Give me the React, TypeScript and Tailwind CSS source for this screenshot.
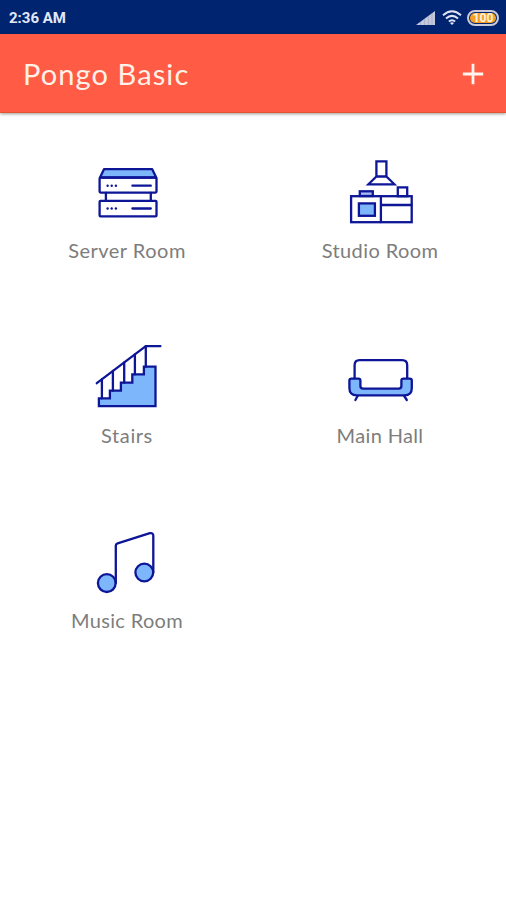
import type { ReactNode } from "react";

type Room = {
  name: string;
  icon: ReactNode;
  labelClass: string;
};

function RoomIcon({ children }: { children: ReactNode }) {
  return (
    <svg
      viewBox="0 0 64 64"
      className="h-16 w-16 overflow-visible"
      fill="none"
      stroke="#0d1696"
      strokeWidth="2.3"
      strokeLinejoin="round"
      strokeLinecap="round"
    >
      {children}
    </svg>
  );
}

function ServerIcon() {
  return (
    <RoomIcon>
      <path d="M9 9.2h48.2l4 8.3H5z" fill="#7db6fa" />
      <rect x="4.6" y="17.6" width="56.9" height="15" rx="1" />
      <rect x="4.6" y="40.8" width="56.9" height="15.6" rx="1" />
      <path d="M10.9 33v7.5M55.8 33v7.5M37.4 25.7h18.4M37.4 48.5h18.4" />
      <g fill="#0d1696" stroke="none">
        <circle cx="12.6" cy="25.7" r="1.2" />
        <circle cx="16.7" cy="25.7" r="1.2" />
        <circle cx="20.9" cy="25.7" r="1.2" />
        <circle cx="12.6" cy="48.5" r="1.2" />
        <circle cx="16.7" cy="48.5" r="1.2" />
        <circle cx="20.9" cy="48.5" r="1.2" />
      </g>
    </RoomIcon>
  );
}

function StudioIcon() {
  return (
    <RoomIcon>
      <g strokeLinejoin="miter">
        <path d="M28.4 1.3h10v15.2h-10zM28.4 16.5l-8 7.8h26l-8-7.8" />
        <rect x="11.8" y="31.3" width="13" height="4.7" fill="#a9b9f3" />
        <rect x="49.8" y="27.4" width="9.4" height="8.8" />
        <rect x="3.1" y="36.2" width="60.6" height="26" />
        <path d="M32.9 36.2v26M32.9 45h30.7" />
        <rect x="10.9" y="43.4" width="16" height="12.4" fill="#7db6fa" />
      </g>
    </RoomIcon>
  );
}

function StairsIcon() {
  return (
    <RoomIcon>
      <path
        d="M3.9 61.2v-7.9h11v-7.6h11v-8h11.4v-8.4h11.6v-7.6h11.6v39.5z"
        fill="#7db6fa"
        strokeLinejoin="miter"
      />
      <path d="M1.8 38.2L50.8 1.2h14.6" />
      <path d="M6.9 34.5v18.8M17.9 26v19.7M29.2 17.5v20.2M39.9 9.5v19.8M50.8 1.2v20.5" />
    </RoomIcon>
  );
}

function SofaIcon() {
  return (
    <RoomIcon>
      <path d="M6.6 33.5V20.2q0-5 5-5h42.6q5 0 5 5v13.3" />
      <path
        d="M3.4 33.6h7q2 0 2 2v5.4q0 2.6 2.6 2.6h35.8q2.6 0 2.6-2.6v-5.4q0-2 2-2h6.4q2 0 2 2v7.3q0 7.4-7.4 7.4H8.8q-7.4 0-7.4-7.4v-7.3q0-2 2-2z"
        fill="#7db6fa"
      />
      <path d="M9.6 51l-2.2 4M56.2 51l2.6 4" />
    </RoomIcon>
  );
}

function MusicIcon() {
  return (
    <RoomIcon>
      <circle cx="11.8" cy="53.1" r="8.9" fill="#7db6fa" />
      <circle cx="49.3" cy="42.5" r="8.9" fill="#7db6fa" />
      <path d="M20.8 53V15.6q0-1.8 1.8-2.3L54.9 3.2q3.4-.6 3.4 2.6v36.7" />
    </RoomIcon>
  );
}

const rooms: Room[] = [
  { name: "Server Room", icon: <ServerIcon />, labelClass: "tracking-[0.5px]" },
  { name: "Studio Room", icon: <StudioIcon />, labelClass: "tracking-[0.4px]" },
  { name: "Stairs", icon: <StairsIcon />, labelClass: "tracking-[0.6px]" },
  { name: "Main Hall", icon: <SofaIcon />, labelClass: "tracking-[0.35px]" },
  { name: "Music Room", icon: <MusicIcon />, labelClass: "tracking-[0.35px]" },
];

function StatusBar() {
  return (
    <div className="flex h-[34px] items-center justify-between bg-[#002470] pt-px pr-[7px] pl-[9px] text-[#e3e8f8]">
      <span className="pt-px font-[Roboto,sans-serif] text-[15px] font-bold">2:36 AM</span>
      <div className="flex items-center">
        <svg viewBox="0 0 20 14" className="mr-[6px] h-[14px] w-5">
          <path d="M0 14L19 0v14z" fill="#c3c8da" />
          <path d="M4.5 11v3M8.5 8v6M12.5 5v9M16 2.5V14" stroke="#a3aac6" strokeWidth=".7" />
        </svg>
        <svg
          viewBox="0 0 20 15"
          className="mr-[5px] h-[15px] w-5"
          fill="none"
          stroke="#dfe5f5"
          strokeWidth="2"
        >
          <path d="M1 5.2q9-8 18 0M4 8.6q6-5.4 12 0M6.9 11.6q3.1-2.8 6.2 0" />
          <path d="M8 13l2 2 2-2q-2-1.5-4 0z" fill="#dfe5f5" stroke="none" />
        </svg>
        <div className="flex h-4 w-8 items-center justify-center rounded-full border-2 border-[#c9cbd8] bg-[#002470] p-px">
          <div className="flex h-full w-full items-center justify-center rounded-full bg-[#f3a126] font-[Roboto,sans-serif] text-[12px] leading-none font-bold text-[#fff3dc]">
            <span className="-my-1">100</span>
          </div>
        </div>
      </div>
    </div>
  );
}

export default function App() {
  return (
    <div className="h-[900px] w-[506px] overflow-hidden bg-white font-[Lato,sans-serif]">
      <StatusBar />
      <header className="flex h-[79px] items-center justify-between border-b border-[#e5532f] bg-[#ff5b45] pt-[2px] pr-[22px] pl-[22px] shadow-[0_1px_3px_rgba(0,0,0,0.4)]">
        <h1 className="pl-px text-[29px] leading-9 tracking-[1.1px] text-[#fff1e8]">Pongo Basic</h1>
        <button type="button" aria-label="Add room">
          <svg
            viewBox="0 0 22 22"
            className="h-[22px] w-[22px]"
            stroke="#fff4ee"
            strokeWidth="2.8"
          >
            <path d="M11 .8v20.4M.8 11h20.4" />
          </svg>
        </button>
      </header>
      <main className="grid grid-cols-2 pt-[47px]">
        {rooms.map((room) => (
          <div key={room.name} className="flex h-[185px] flex-col items-center">
            {room.icon}
            <span
              className={`mt-3 pl-px text-[20px] leading-7 text-[#7d7d7d] ${room.labelClass}`}
            >
              {room.name}
            </span>
          </div>
        ))}
      </main>
    </div>
  );
}
